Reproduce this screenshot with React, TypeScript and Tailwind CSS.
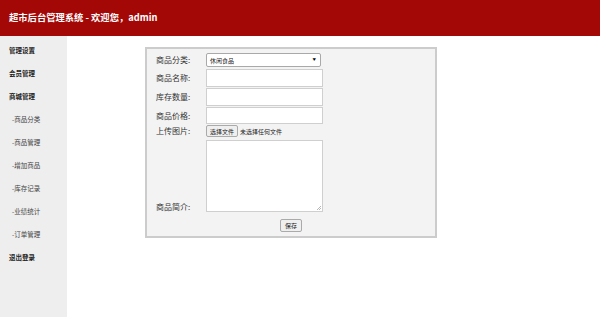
import React from 'react';

const menu = [
  { label: '管理设置', sub: false },
  { label: '会员管理', sub: false },
  { label: '商城管理', sub: false },
  { label: '-商品分类', sub: true },
  { label: '-商品管理', sub: true },
  { label: '-增加商品', sub: true },
  { label: '-库存记录', sub: true },
  { label: '-业绩统计', sub: true },
  { label: '-订单管理', sub: true },
  { label: '退出登录', sub: false },
];

const font = { fontFamily: '"Noto Sans CJK SC", "Liberation Sans", sans-serif' };

const App: React.FC = () => {
  return (
    <div className="w-[600px] h-[317px] flex flex-col bg-white overflow-hidden" style={font}>
      {/* 头部 */}
      <div className="h-[36px] shrink-0 bg-[#a30806] flex items-center pl-[9px]">
        <span className="text-white text-[9.3px] font-bold">超市后台管理系统 - 欢迎您，admin</span>
      </div>

      <div className="flex flex-1">
        {/* 侧边菜单 */}
        <div className="w-[67px] bg-[#eeeeee] pt-[3px]">
          {menu.map((m) => (
            <div
              key={m.label}
              className={
                m.sub
                  ? 'h-[23px] flex items-center pl-[12px] text-[6.5px] text-[#444]'
                  : 'h-[23px] flex items-center pl-[9px] text-[6.5px] font-bold text-[#222]'
              }
            >
              {m.label}
            </div>
          ))}
        </div>

        {/* 表单 */}
        <div className="flex-1 pl-[78px] pt-[11px]">
          <div className="w-[292px] h-[191px] border-2 border-[#cccccc] bg-[#f3f3f3] pt-[4px] pl-[9px] text-[8px] text-[#333]">
            <div className="flex items-center h-[14px]">
              <span className="w-[50px]">商品分类:</span>
              <div className="w-[115px] h-[14px] bg-white border border-[#a9a9a9] rounded-[2px] flex items-center justify-between px-[3px]">
                <span className="text-[6px] text-[#222]">休闲食品</span>
                <span className="text-[3.5px] text-black pr-[1px]">▼</span>
              </div>
            </div>
            <div className="flex items-center h-[18px] mt-[2px]">
              <span className="w-[50px]">商品名称:</span>
              <div className="w-[117px] h-[18px] bg-white border border-[#cfcfcf]" />
            </div>
            <div className="flex items-center h-[18px] mt-[1px]">
              <span className="w-[50px]">库存数量:</span>
              <div className="w-[117px] h-[18px] bg-white border border-[#cfcfcf]" />
            </div>
            <div className="flex items-center h-[17px] mt-[1px]">
              <span className="w-[50px]">商品价格:</span>
              <div className="w-[117px] h-[17px] bg-white border border-[#cfcfcf]" />
            </div>
            <div className="flex items-center h-[12px] mt-[1px]">
              <span className="w-[50px]">上传图片:</span>
              <div className="h-[12px] px-[3px] bg-[#efefef] border border-[#aaaaaa] rounded-[2px] flex items-center text-[6px] text-[#222]">
                选择文件
              </div>
              <span className="ml-[2px] text-[6px] text-[#222]">未选择任何文件</span>
            </div>
            <div className="flex items-end h-[72px] mt-[3px]">
              <span className="w-[50px] mb-[-1px]">商品简介:</span>
              <div className="relative w-[117px] h-[72px] bg-white border border-[#cfcfcf]">
                <svg className="absolute right-[1px] bottom-[1px]" width="5" height="5" viewBox="0 0 5 5">
                  <path d="M1 5 L5 1 M3 5 L5 3" stroke="#999" strokeWidth="0.7" />
                </svg>
              </div>
            </div>
            <div className="flex justify-center mt-[7px] pr-[9px]">
              <div className="h-[13px] w-[22px] bg-[#efefef] border border-[#aaaaaa] rounded-[2px] flex items-center justify-center text-[6px] text-[#222]">
                保存
              </div>
            </div>
          </div>
        </div>
      </div>
    </div>
  );
};

export default App;
